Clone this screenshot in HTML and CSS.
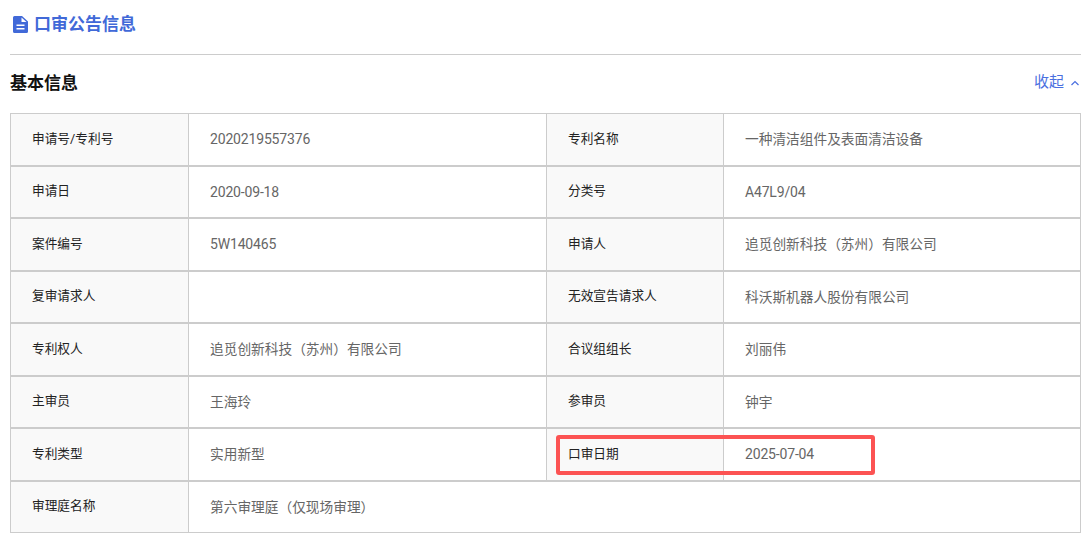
FILE: index.html
```html
<!DOCTYPE html>
<html lang="zh-CN">
<head>
<meta charset="utf-8">
<title>口审公告信息</title>
<link rel="stylesheet" href="styles.css">
</head>
<body>
<div class="page">
  <header class="title-bar">
    <svg class="doc-icon" viewBox="0 0 15 17" width="15" height="17" aria-hidden="true">
      <path fill="#4169d8" fill-rule="evenodd" d="M1.500 0h7.500l6 5.500v10a1.500 1.500 0 0 1-1.500 1.500h-12a1.500 1.500 0 0 1-1.500-1.500v-14a1.500 1.500 0 0 1 1.500-1.500zM8.500 1.500v4.500h5zM3.500 8.500v1.500h8v-1.500zM3.500 12v1.500h8v-1.500z"/>
    </svg>
    <h1 class="title">口审公告信息</h1>
  </header>
  <div class="section-head">
    <h2 class="section-title">基本信息</h2>
    <a class="collapse">收起
      <svg class="chevron" viewBox="0 0 10 6" width="10" height="6" aria-hidden="true"><path d="M1.500 5 5 1.500 8.500 5" fill="none" stroke="#4a6fe0" stroke-width="1.200"/></svg>
    </a>
  </div>
  <div class="table">
    <div class="row">
      <div class="label">申请号/专利号</div><div class="value">2020219557376</div>
      <div class="label">专利名称</div><div class="value cjk">一种清洁组件及表面清洁设备</div>
    </div>
    <div class="row">
      <div class="label">申请日</div><div class="value">2020-09-18</div>
      <div class="label">分类号</div><div class="value">A47L9/04</div>
    </div>
    <div class="row">
      <div class="label">案件编号</div><div class="value">5W140465</div>
      <div class="label">申请人</div><div class="value cjk">追觅创新科技（苏州）有限公司</div>
    </div>
    <div class="row">
      <div class="label">复审请求人</div><div class="value"></div>
      <div class="label">无效宣告请求人</div><div class="value cjk">科沃斯机器人股份有限公司</div>
    </div>
    <div class="row">
      <div class="label">专利权人</div><div class="value cjk">追觅创新科技（苏州）有限公司</div>
      <div class="label">合议组组长</div><div class="value cjk">刘丽伟</div>
    </div>
    <div class="row">
      <div class="label">主审员</div><div class="value cjk">王海玲</div>
      <div class="label">参审员</div><div class="value cjk">钟宇</div>
    </div>
    <div class="row">
      <div class="label">专利类型</div><div class="value cjk">实用新型</div>
      <div class="label">口审日期</div><div class="value">2025-07-04</div>
    </div>
    <div class="row row-wide">
      <div class="label">审理庭名称</div><div class="value cjk">第六审理庭（仅现场审理）</div>
    </div>
    <div class="highlight"></div>
  </div>
</div>
</body>
</html>
```
FILE: styles.css
```css
* { box-sizing: border-box; }
html, body { margin: 0; padding: 0; background: #fff; }
body {
  width: 1087px;
  height: 537px;
  overflow: hidden;
  font-family: Roboto, "Noto Sans CJK SC", sans-serif;
}
.page { padding: 0 6px 0 10px; }
.title-bar {
  height: 55px;
  padding: 13px 0 0 3px;
  display: flex;
  align-items: flex-start;
  gap: 6px;
  border-bottom: 1px solid #ccc;
}
.doc-icon { margin-top: 3px; }
.title {
  margin: 0;
  font-size: 17px;
  line-height: 22px;
  font-weight: 700;
  color: #4169d8;
}
.section-head {
  height: 58px;
  display: flex;
  justify-content: space-between;
  align-items: flex-start;
  padding-top: 16px;
}
.section-title {
  margin: 0;
  font-size: 17px;
  line-height: 24px;
  font-weight: 700;
  color: #111;
}
.collapse {
  font-size: 15px;
  line-height: 20px;
  margin-top: 1px;
  color: #4a6fe0;
  display: flex;
  align-items: center;
  gap: 6px;
  padding-right: 1px;
}
.chevron { margin-top: 1px; }
.table {
  position: relative;
  display: flex;
  flex-direction: column;
  width: 1071px;
  border-left: 1px solid #ccc;
  border-right: 1px solid #ccc;
}
.row {
  display: grid;
  grid-template-columns: 178px 357px 178px 1fr;
  height: 52.5px;
  border-top: 1px solid #ccc;
  border-bottom: 1px solid #ccc;
}
.row-wide { grid-template-columns: 178px 1fr; }
.label, .value {
  display: flex;
  align-items: center;
  padding-left: 21px;
}
.label {
  font-size: 12.700px;
  background: #f9f9f9;
  color: #222;
  border-right: 1px solid #ccc;
  padding-bottom: 3.800px;
}
.value {
  font-size: 14px;
  letter-spacing: -0.170px;
  color: #666;
}
.cjk {
  font-size: 13.700px;
  letter-spacing: 0;
  padding-bottom: 2px;
}
.value + .label { border-left: 1px solid #ccc; }
.highlight {
  position: absolute;
  left: 545px;
  top: 322px;
  width: 319px;
  height: 40px;
  border: 4px solid #fc5353;
  border-radius: 3px;
}
```
